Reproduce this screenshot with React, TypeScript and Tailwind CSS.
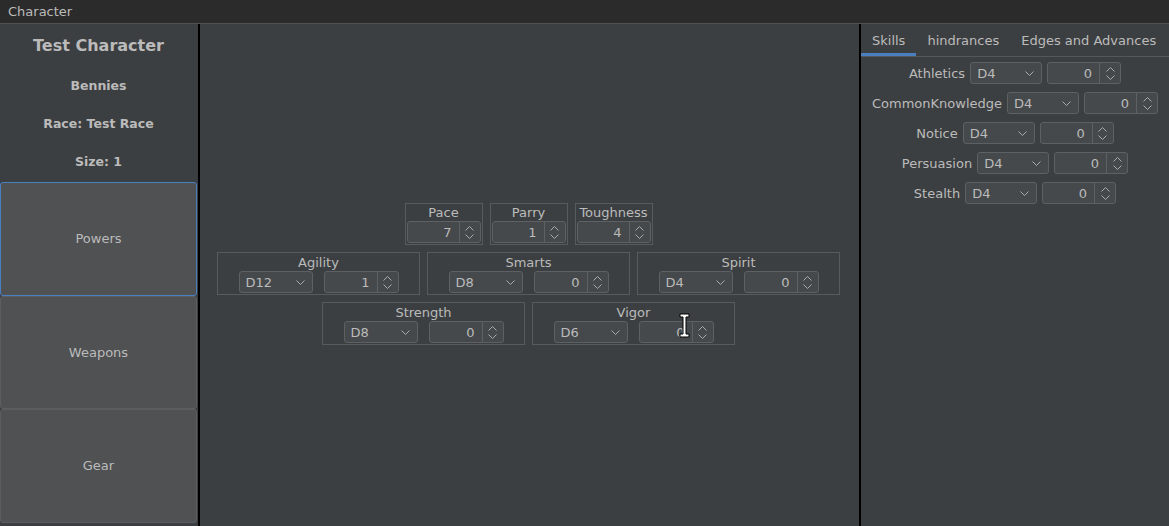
import React from "react";

const font = { fontFamily: '"DejaVu Sans", "Liberation Sans", sans-serif' };

function Chevron() {
  return (
    <svg width="9" height="5" viewBox="0 0 9 5" className="shrink-0">
      <polyline points="0.5,0.5 4.5,4.5 8.5,0.5" fill="none" stroke="#a9abad" strokeWidth="1" />
    </svg>
  );
}

function SpinArrows() {
  return (
    <svg width="9" height="13" viewBox="0 0 9 13">
      <polyline points="0.5,4.5 4.5,0.5 8.5,4.5" fill="none" stroke="#a9abad" strokeWidth="1" />
      <polyline points="0.5,8.5 4.5,12.5 8.5,8.5" fill="none" stroke="#a9abad" strokeWidth="1" />
    </svg>
  );
}

function Combo({ value, w }: { value: string; w: string }) {
  return (
    <div
      className={`${w} h-[22px] shrink-0 flex items-center justify-between pl-[6px] pr-[7px] rounded-[3px] border border-[#5e6163] bg-[#45494b] text-[13px] text-[#bbbbbb]`}
    >
      <span className="leading-none">{value}</span>
      <Chevron />
    </div>
  );
}

function Spinner({ value, w }: { value: string; w: string }) {
  return (
    <div
      className={`${w} h-[22px] shrink-0 flex rounded-[3px] border border-[#5e6163] bg-[#45494b] text-[13px] text-[#bbbbbb]`}
    >
      <div className="flex-1 flex items-center justify-end pr-[7px] leading-none">{value}</div>
      <div className="w-[21px] border-l border-[#5e6163] flex items-center justify-center">
        <SpinArrows />
      </div>
    </div>
  );
}

function DerivedBox({ label, value }: { label: string; value: string }) {
  return (
    <div className="w-[78px] h-[42px] border border-[#585b5d] flex flex-col items-center px-[1px]">
      <div className="h-[17px] shrink-0 flex items-center justify-center text-[13px] text-[#bbbbbb] leading-none">{label}</div>
      <Spinner value={value} w="w-[74px]" />
    </div>
  );
}

function AttrBox({ label, die, value }: { label: string; die: string; value: string }) {
  return (
    <div className="w-[203px] h-[43px] border border-[#585b5d] flex flex-col items-center">
      <div className="h-[18px] shrink-0 flex items-center justify-center text-[13px] text-[#bbbbbb] leading-none">{label}</div>
      <div className="flex items-center gap-[11px]">
        <Combo value={die} w="w-[74px]" />
        <Spinner value={value} w="w-[75px]" />
      </div>
    </div>
  );
}

function SkillRow({ label }: { label: string }) {
  return (
    <div className="flex items-center justify-center gap-[5px] h-[22px]">
      <span className="text-[13px] text-[#bbbbbb] leading-none whitespace-nowrap">{label}</span>
      <Combo value="D4" w="w-[72px]" />
      <Spinner value="0" w="w-[74px]" />
    </div>
  );
}

function SideButton({ label, focused }: { label: string; focused?: boolean }) {
  return (
    <div
      className={`flex-1 flex items-center justify-center rounded-[3px] bg-[#4f5153] text-[13px] text-[#bbbbbb] border ${
        focused ? "border-[#4a7fc0]" : "border-[#5b5d5f]"
      }`}
    >
      {label}
    </div>
  );
}

export default function App() {
  return (
    <div className="relative w-[1169px] h-[526px] bg-[#3c3f41] flex flex-col overflow-hidden" style={font}>
      <div className="h-[24px] shrink-0 bg-[#2b2b2b] border-b border-[#4e5052] flex items-center pl-[8px] text-[13px] text-[#bbbbbb]">
        Character
      </div>
      <div className="flex-1 flex min-h-0">
        {/* Left panel */}
        <div className="w-[198px] shrink-0 flex flex-col pr-[1px] pb-[3px] pt-[1px]">
          <div className="h-[42px] flex items-center justify-center text-[16px] font-bold text-[#bbbbbb]">Test Character</div>
          <div className="h-[38px] flex items-center justify-center text-[12.5px] font-bold text-[#bbbbbb]">Bennies</div>
          <div className="h-[38px] flex items-center justify-center text-[12.5px] font-bold text-[#bbbbbb]">Race: Test Race</div>
          <div className="h-[38px] flex items-center justify-center text-[12.5px] font-bold text-[#bbbbbb]">Size: 1</div>
          <div className="h-[1px]" />
          <div className="flex-1 flex flex-col">
            <SideButton label="Powers" focused />
            <SideButton label="Weapons" />
            <SideButton label="Gear" />
          </div>
        </div>
        <div className="w-[2px] shrink-0 bg-[#000000]" />
        {/* Center */}
        <div className="flex-1 flex flex-col items-center justify-center gap-[7px] pb-[2px] pr-[2px]">
          <div className="flex gap-[7px]">
            <DerivedBox label="Pace" value="7" />
            <DerivedBox label="Parry" value="1" />
            <DerivedBox label="Toughness" value="4" />
          </div>
          <div className="flex gap-[7px]">
            <AttrBox label="Agility" die="D12" value="1" />
            <AttrBox label="Smarts" die="D8" value="0" />
            <AttrBox label="Spirit" die="D4" value="0" />
          </div>
          <div className="flex gap-[7px]">
            <AttrBox label="Strength" die="D8" value="0" />
            <AttrBox label="Vigor" die="D6" value="0" />
          </div>
        </div>
        <div className="w-[2px] shrink-0 bg-[#000000]" />
        {/* Right panel */}
        <div className="w-[308px] shrink-0 flex flex-col overflow-hidden">
          <div className="h-[33px] shrink-0 flex border-b border-[#55585a] text-[13px] text-[#bbbbbb] whitespace-nowrap">
            <div className="px-[11px] flex items-center border-b-[3px] border-[#4a7fc0] pt-[5px]">Skills</div>
            <div className="px-[11px] flex items-center border-b-[3px] border-transparent pt-[5px]">hindrances</div>
            <div className="px-[11px] flex items-center border-b-[3px] border-transparent pt-[5px]">Edges and Advances</div>
          </div>
          <div className="flex flex-col gap-[8px] pt-[5px]">
            <SkillRow label="Athletics" />
            <SkillRow label="CommonKnowledge" />
            <SkillRow label="Notice" />
            <SkillRow label="Persuasion" />
            <SkillRow label="Stealth" />
          </div>
        </div>
      </div>
      {/* mouse cursor overlay */}
      <svg className="absolute left-[679px] top-[313px]" width="11" height="25" viewBox="0 0 11 25">
        <path
          d="M1,1 H10 V4 H7 V21 H10 V24 H1 V21 H4 V4 H1 Z"
          fill="#ffffff"
          stroke="#000000"
          strokeWidth="1"
          strokeLinejoin="round"
        />
      </svg>
    </div>
  );
}
